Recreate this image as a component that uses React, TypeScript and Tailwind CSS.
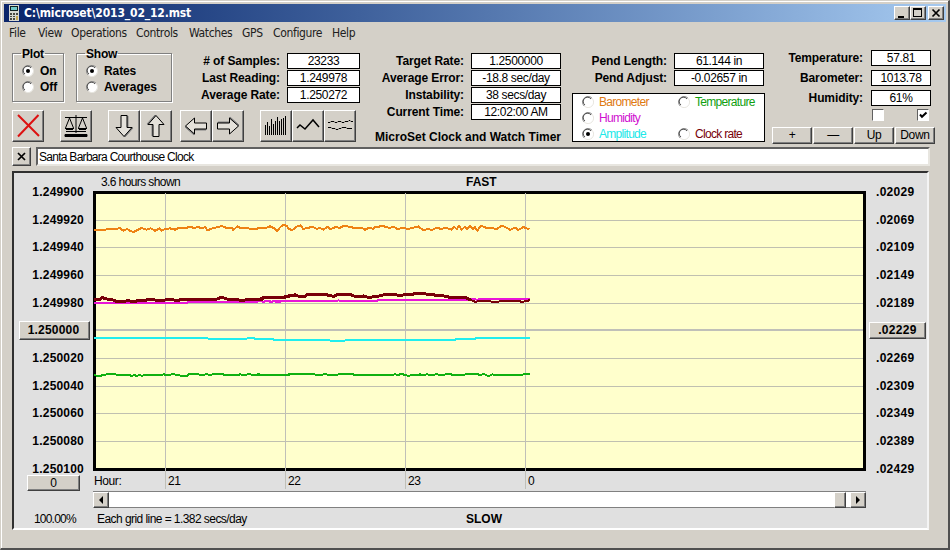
import type { ReactNode } from 'react'
import clsx from 'clsx'

const raised =
  'bg-[#d4d0c8] border border-t-white border-l-white border-r-[#404040] border-b-[#404040] shadow-[inset_-1px_-1px_0_#808080]'
const bold = 'font-bold text-[12px]'

const menu = [
  { label: 'File', width: 'w-[29px]' },
  { label: 'View', width: 'w-[33px]' },
  { label: 'Operations', width: 'w-[65px]' },
  { label: 'Controls', width: 'w-[53px]' },
  { label: 'Watches', width: 'w-[53px]' },
  { label: 'GPS', width: 'w-[31px]' },
  { label: 'Configure', width: 'w-[59px]' },
  { label: 'Help', width: 'w-[40px]' },
]

const leftAxis = [
  '1.249900', '1.249920', '1.249940', '1.249960', '1.249980', '1.250000',
  '1.250020', '1.250040', '1.250060', '1.250080', '1.250100',
]
const rightAxis = [
  '.02029', '.02069', '.02109', '.02149', '.02189', '.02229',
  '.02269', '.02309', '.02349', '.02389', '.02429',
]

// each trace is recorded in two blocks, in thirds of a pixel
const traces = [
  {
    name: 'humidity',
    color: '#e815d8',
    width: 6,
    first: '12,264 285,264 300,261 500,261 505,258 520,260 532,257 545,260 560,257 575,259 600,258',
    second: '0,258 12,260 22,258 30,261 42,259 50,261 62,260 68,258 230,258 236,256 242,258 350,258 355,255 620,255 630,253 640,251 650,254 665,252 720,253 735,251 745,253 760,251 810,251',
  },
  {
    name: 'rate',
    color: '#780008',
    width: 9,
    first: '12,255 30,253 38,247 45,251 65,254 75,257 82,260 100,259 115,257 130,260 145,257 170,255 195,255 210,258 225,255 240,254 265,256 277,252 290,254 350,253 375,255 385,250 395,247 405,250 420,255 435,252 450,256 480,254 515,254 525,247 560,248 585,247 600,243',
    second: '0,252 12,247 70,247 85,243 98,243 105,239 112,243 135,244 140,239 195,238 210,242 222,244 232,238 270,238 285,244 310,243 325,247 350,245 370,240 405,238 420,243 435,238 458,239 463,235 475,237 485,236 520,239 530,242 540,240 560,245 575,248 590,246 620,249 635,256',
  },
  {
    name: 'rate tail',
    color: '#780008',
    width: 6,
    first: '',
    second: '633,255 645,260 655,259 690,259 700,261 715,261 720,258 770,258 785,260 800,259 810,254',
  },
  {
    name: 'amplitude',
    color: '#20eeee',
    width: 6,
    first: '12,369 352,369 355,371 470,371 478,369 488,369 495,371 548,372 552,375 600,375',
    second: '-10,372 40,372 45,375 205,375 215,378 250,378 260,375 585,374 590,372 645,371 650,369 810,369',
  },
  {
    name: 'temperature',
    color: '#10b010',
    width: 6,
    first: '12,481 30,483 40,480 55,477 75,478 85,480 118,480 125,483 132,480 140,483 150,480 155,483 162,480 210,480 222,478 232,481 250,477 262,480 280,483 290,483 298,477 320,477 335,480 350,478 362,480 372,477 395,477 405,480 430,480 445,481 450,478 465,480 478,477 490,480 500,480 506,477 514,480 600,480',
    second: '-10,480 80,480 88,477 160,477 170,480 185,480 195,477 205,480 230,480 240,477 275,477 285,480 398,480 405,477 412,480 425,477 445,483 455,480 470,481 480,478 488,481 500,478 515,480 530,478 545,480 568,477 580,480 610,480 620,477 650,477 660,480 672,477 685,484 698,478 705,480 785,480 792,477 810,477',
  },
  {
    name: 'barometer',
    color: '#ee8214',
    width: 6,
    first: '12,45 60,43 90,40 100,47 112,42 120,47 130,51 145,44 155,39 170,44 182,40 195,47 208,41 215,47 225,42 240,40 255,44 265,39 285,40 300,35 312,39 325,36 335,40 345,36 352,46 365,41 380,37 395,33 410,39 425,38 430,45 442,34 452,40 470,40 495,42 510,39 525,40 540,34 553,40 562,48 572,35 582,29 590,33 597,42',
    second: '85,42 97,45 110,35 122,31 130,42 145,38 160,36 170,42 180,39 190,44 203,35 210,43 225,37 240,38 253,32 270,36 290,40 305,38 315,44 328,38 340,42 347,35 372,34 388,39 400,35 412,42 430,39 445,42 460,38 475,34 490,46 505,41 515,46 530,38 543,42 557,38 575,44 582,35 590,42 597,33 605,44 615,35 622,42 630,33 640,42 645,36 652,47 662,32 680,39 700,40 710,42 725,32 740,38 750,45 765,38 775,45 790,36 800,40 808,43',
  },
]

function Radio({ on = false }: { on?: boolean }) {
  return (
    <svg width="12" height="12" viewBox="0 0 12 12" className="shrink-0">
      <circle cx="6" cy="6" r="5.2" fill="#fff" />
      <path d="M10 2.2A5.4 5.4 0 1 0 2.2 10" fill="none" stroke="#808080" />
      <path d="M9 3A4.3 4.3 0 1 0 3 9" fill="none" stroke="#404040" strokeWidth="0.9" />
      <path d="M10 2.2A5.4 5.4 0 0 1 2.2 10" fill="none" stroke="#e8e6e0" />
      {on && <circle cx="6" cy="6" r="2" />}
    </svg>
  )
}

function Group({ title, options, className }: { title: string; options: string[]; className: string }) {
  return (
    <fieldset
      className={clsx(
        'h-[56px] -mt-[7px] border border-[#808080] shadow-[inset_1px_1px_0_#fff,1px_1px_0_#fff] pl-[9px]',
        className,
      )}
    >
      <legend className={clsx(bold, '-ml-[1px] px-[1px] h-[14px] leading-[16px] tracking-[-0.2px]')}>{title}</legend>
      {options.map((option, i) => (
        <div key={option} className="flex items-center h-[16px] gap-[6px] relative top-[3px]">
          <Radio on={i === 0} />
          <span className={clsx(bold, 'tracking-[-0.1px]')}>{option}</span>
        </div>
      ))}
    </fieldset>
  )
}

interface ReadingProps {
  label: string
  value: string
  box: string
  gap?: string
}

function Reading({ label, value, box, gap = 'gap-[7px]' }: ReadingProps) {
  return (
    <div className={clsx('flex justify-end items-center h-[16px]', gap)}>
      <span className={clsx(bold, 'tracking-[-0.1px]')}>{label}</span>
      <span
        className={clsx(
          'h-[16px] shrink-0 border border-black bg-white text-center leading-[15px] tracking-[-0.35px]',
          box,
        )}
      >
        {value}
      </span>
    </div>
  )
}

function Tool({ children, className }: { children: ReactNode; className?: string }) {
  return (
    <button className={clsx(raised, 'size-[32px] flex items-center justify-center', className)}>
      <svg width="30" height="30" viewBox="0 0 30 30" fill="none" stroke="#000" className="shrink-0">
        {children}
      </svg>
    </button>
  )
}

function ArrowShape({ turn }: { turn: number }) {
  return (
    <g transform={`rotate(${turn} 15 15)`}>
      <path d="M12 5h6v12h5l-8 9-8-9h5z" fill="#808080" stroke="#808080" transform="translate(1 0)" />
      <path d="M12 4.500h6v12h5l-8 9-8-9h5z" fill="#e4e1da" />
    </g>
  )
}

function Toolbar() {
  return (
    <div className="flex">
      <Tool>
        <path d="M5 4 26 25M25.500 4 5 25.500" stroke="#dd1111" strokeWidth="2" />
      </Tool>
      <Tool className="ml-[16px]">
        <path d="M4 6.500h22M15 4v18M11 20.500h8M5 20.500h20" />
        <path d="M8.500 7 4.500 17M8.500 7l4 10M21.500 7l-4 10M21.500 7l4 10M4 17.500h9M17 17.500h9" />
        <path d="M5 18.500h7M18 18.500h7" />
        <path d="M4 23.500h22v2H4z" fill="#000" />
      </Tool>
      <Tool className="ml-[16px]">
        <ArrowShape turn={0} />
      </Tool>
      <Tool>
        <ArrowShape turn={180} />
      </Tool>
      <Tool className="ml-[8px]">
        <ArrowShape turn={90} />
      </Tool>
      <Tool>
        <ArrowShape turn={-90} />
      </Tool>
      <Tool className="ml-[16px]">
        <path
          d="M4.500 14v10M6.500 11v13M8.500 15v9M10.500 8v16M12.500 13v11M14.500 10v14M16.500 6v18M18.500 10v14M20.500 8v16M22.500 7v17M24.500 5v19"
          strokeWidth="1"
          shapeRendering="crispEdges"
        />
      </Tool>
      <Tool>
        <path d="M4 17l3-3 5 4 8-9 6 7" strokeWidth="1.5" />
      </Tool>
      <Tool>
        <path
          d="M3 11.500h2l1-1h3l1 1h2l1-1h3l1 1h2l1-1h3l1-1h1l1 1h2M3 16.500h3l1 1h3l1 1h2l1-1h2l1-1h4l1 1h5"
          strokeWidth="1"
        />
      </Tool>
    </div>
  )
}

function LegendItem({ label, on, className }: { label: string; on?: boolean; className: string }) {
  return (
    <div className={clsx('flex items-center gap-[5px] h-[16px]', className)}>
      <Radio on={on} />
      <span className="tracking-[-0.7px]">{label}</span>
    </div>
  )
}

function Header() {
  return (
    <div className="flex h-[105px] pl-[8px] pt-[11px]">
      <div className="w-[348px]">
        <div className="flex h-[57px]">
          <Group title="Plot" options={['On', 'Off']} className="w-[52px]" />
          <Group title="Show" options={['Rates', 'Averages']} className="w-[96px] ml-[12px]" />
          <div className="flex-1 flex flex-col gap-[1px]">
            <Reading label="# of Samples:" value="23233" box="w-[73px]" />
            <Reading label="Last Reading:" value="1.249978" box="w-[73px]" />
            <Reading label="Average Rate:" value="1.250272" box="w-[73px]" />
          </div>
        </div>
        <Toolbar />
      </div>

      <div className="w-[201px] flex flex-col gap-[1px]">
        <Reading label="Target Rate:" value="1.2500000" box="w-[90px]" />
        <Reading label="Average Error:" value="-18.8 sec/day" box="w-[90px]" />
        <Reading label="Instability:" value="38 secs/day" box="w-[90px]" />
        <Reading label="Current Time:" value="12:02:00 AM" box="w-[90px]" />
        <div className={clsx(bold, 'text-right mt-[8px] leading-[16px] whitespace-nowrap')}>
          MicroSet Clock and Watch Timer
        </div>
      </div>

      <div className="w-[204px] flex flex-col gap-[1px]">
        <Reading label="Pend Length:" value="61.144 in" box="w-[90px] mr-[1px]" />
        <Reading label="Pend Adjust:" value="-0.02657 in" box="w-[90px] mr-[1px]" />
        <div className="ml-[11px] mt-[6px] h-[49px] w-[193px] border border-black bg-white grid grid-cols-[96px_1fr] pl-[9px] content-start">
          <LegendItem label="Barometer" className="text-[#e07a10]" />
          <LegendItem label="Temperature" className="text-[#10a010]" />
          <LegendItem label="Humidity" className="text-[#d010d0] col-span-2" />
          <LegendItem label="Amplitude" on className="text-[#20e8e8]" />
          <LegendItem label="Clock rate" className="text-[#780008]" />
        </div>
      </div>

      <div className="w-[170px] -mt-[3px]">
        <div className="flex flex-col gap-[4px] pr-[4px]">
          <Reading label="Temperature:" value="57.81" box="w-[60px]" gap="gap-[8px]" />
          <Reading label="Barometer:" value="1013.78" box="w-[60px]" gap="gap-[8px]" />
          <Reading label="Humidity:" value="61%" box="w-[60px]" gap="gap-[8px]" />
        </div>
        <div className="flex justify-end gap-[33px] pr-[6px] mt-[3px]">
          <Check />
          <Check on />
        </div>
        <div className="flex gap-[1px] pl-[7px] mt-[6px]">
          {['+', '—', 'Up', 'Down'].map((label) => (
            <button key={label} className={clsx(raised, 'w-[40px] h-[17px] shrink-0 leading-[15px] tracking-[-0.3px]')}>
              {label}
            </button>
          ))}
        </div>
      </div>
    </div>
  )
}

function Check({ on = false }: { on?: boolean }) {
  return (
    <span className="size-[12px] bg-white border border-t-[#606060] border-l-[#606060] border-r-white border-b-white">
      {on && (
        <svg width="10" height="10" viewBox="0 0 10 10">
          <path d="M2 4.500 4 6.800 8.500 2.500" fill="none" stroke="#000" strokeWidth="2" />
        </svg>
      )}
    </span>
  )
}

function Plot() {
  return (
    <svg width="773" height="299" viewBox="0 0 773 299" shapeRendering="crispEdges" className="block">
      <rect x="1.500" y="1.500" width="770" height="277" fill="#ffffcc" stroke="#000" strokeWidth="3" />
      {[29, 56, 84, 112, 167, 195, 222, 250].map((y) => (
        <rect key={y} x="3" y={y} width="767" height="1" fill="#c0c0b0" />
      ))}
      <rect x="3" y="138" width="767" height="2" fill="#c0c0b8" />
      {[72, 192, 312, 432].map((x) => (
        <rect key={x} x={x} y="2" width="1" height="296" fill="#c0c0b8" />
      ))}
      {traces.map((trace) => (
        <g key={trace.name} fill="none" stroke={trace.color} strokeWidth={trace.width}>
          <polyline points={trace.first} transform="translate(-3 24) scale(0.33333)" />
          <polyline points={trace.second} transform="translate(167 24) scale(0.33333)" />
        </g>
      ))}
    </svg>
  )
}

function ChartPanel() {
  return (
    <div className="ml-[8px] mt-[5px] w-[917px] h-[359px] bg-[#e0e0e0] border-2 border-t-[#303030] border-l-[#303030] border-r-[#f4f4f4] border-b-white flex">
      <div className="w-[79px] pt-[5px]">
        {leftAxis.map((value, i) => (
          <div key={value} className="h-[27.7px] flex items-center justify-end pr-[9px]">
            {i === 5 ? (
              <button className={clsx(raised, 'h-[19px] w-[71px] -mr-[6px] pr-[2px] shrink-0 text-[12px] font-bold tracking-[0.2px] leading-[15px]')}>
                {value}
              </button>
            ) : (
              <span className="text-[12px] font-bold tracking-[0.2px]">{value}</span>
            )}
          </div>
        ))}
        <button className={clsx(raised, 'block ml-[13px] -mt-[8px] h-[16px] w-[53px] leading-[14px]')}>0</button>
        <div className="mt-[20px] ml-[20px] tracking-[-0.8px] leading-[16px]">100.00%</div>
      </div>

      <div className="w-[773px]">
        <div className="h-[18px] grid grid-cols-[373px_1fr] items-center">
          <span className="pl-[8px] tracking-[-0.6px]">3.6 hours shown</span>
          <span className={bold}>FAST</span>
        </div>
        <Plot />
        <div className="flex -mt-[17px] h-[18px] leading-[16px] tracking-[-0.4px]">
          <span className="w-[75px] pl-[1px]">Hour:</span>
          <span className="w-[120px]">21</span>
          <span className="w-[120px]">22</span>
          <span className="w-[120px]">23</span>
          <span>0</span>
        </div>
        <div className="flex h-[17px] bg-white border-y border-y-[#808080]">
          <button className={clsx(raised, 'w-[16px] h-[16px] flex items-center justify-center')}>
            <svg width="4" height="8" viewBox="0 0 4 8">
              <path d="M4 0v8L0 4z" />
            </svg>
          </button>
          <div className="flex-1" />
          <div className={clsx(raised, 'w-[12px] h-[16px] mr-[4px]')} />
          <button className={clsx(raised, 'w-[16px] h-[16px] flex items-center justify-center')}>
            <svg width="4" height="8" viewBox="0 0 4 8">
              <path d="M0 0v8L4 4z" />
            </svg>
          </button>
        </div>
        <div className="grid grid-cols-[373px_1fr] mt-[3px] leading-[16px]">
          <span className="pl-[4px] tracking-[-0.56px]">Each grid line = 1.382 secs/day</span>
          <span className={bold}>SLOW</span>
        </div>
      </div>

      <div className="w-[61px] pt-[5px]">
        {rightAxis.map((value, i) => (
          <div key={value} className="h-[27.7px] flex items-center pl-[10px]">
            {i === 5 ? (
              <button className={clsx(raised, 'h-[17px] w-[57px] -ml-[7px] shrink-0 text-[12px] font-bold tracking-[0.3px] leading-[14px]')}>
                {value}
              </button>
            ) : (
              <span className="text-[12px] font-bold tracking-[0.3px]">{value}</span>
            )}
          </div>
        ))}
      </div>
    </div>
  )
}

function TitleBar() {
  return (
    <div className="h-[18px] flex items-center bg-linear-to-r from-[#0a246a] to-[#a6caf0] pl-[4px] pr-[2px]">
      <svg width="12" height="16" viewBox="0 0 12 16" shapeRendering="crispEdges">
        <path d="M1 0h10v16H1z" fill="#d8d8d0" />
        <path d="M2 1h8v5H2z" fill="#102020" />
        <path d="M3 2h6v3H3z" fill="#70c8c8" />
        <path d="M2 8h2v2H2zM5 8h2v2H5zM8 8h2v2H8zM2 11h2v1H2zM5 11h2v1H5zM2 13h2v2H2zM5 13h2v2H5z" fill="#484840" />
        <path d="M8 11h2v4H8z" fill="#c8a850" />
      </svg>
      <span className="ml-[4px] flex-1 text-white font-bold text-[12px] tracking-[-0.15px] font-['DejaVu_Sans_Condensed','DejaVu_Sans',sans-serif] [font-stretch:condensed]">
        C:\microset\2013_02_12.mst
      </span>
      <div className="flex">
        <button className={clsx(raised, 'w-[16px] h-[14px]')}>
          <svg width="14" height="12" shapeRendering="crispEdges">
            <path d="M3 9h6v2H3z" />
          </svg>
        </button>
        <button className={clsx(raised, 'w-[16px] h-[14px]')}>
          <svg width="14" height="12" shapeRendering="crispEdges">
            <path d="M2 1h9v9H2zM3 3v6h7V3z" fillRule="evenodd" />
          </svg>
        </button>
        <button className={clsx(raised, 'w-[16px] h-[14px] ml-[2px]')}>
          <svg width="14" height="12">
            <path d="M3.500 2.500l7 7M10.500 2.500l-7 7" stroke="#000" strokeWidth="1.700" />
          </svg>
        </button>
      </div>
    </div>
  )
}

export default function App() {
  return (
    <div className="w-[950px] h-[550px] overflow-hidden bg-[#d4d0c8] text-black text-[12px] font-['Liberation_Sans',Arial,sans-serif] border-t border-l border-t-[#d4d0c8] border-l-[#d4d0c8] border-r-2 border-b-2 border-r-[#505050] border-b-[#505050]">
      <div className="h-full border-t border-l border-white pl-[2px] pt-[2px] pr-[2px]">
        <TitleBar />
        <div className="flex h-[20px] items-center pt-[2px] pl-[5px] text-[12px] text-[#202020] font-['DejaVu_Sans_Condensed','DejaVu_Sans',sans-serif] [font-stretch:condensed] tracking-[-0.35px]">
          {menu.map((item) => (
            <span key={item.label} className={item.width}>
              {item.label}
            </span>
          ))}
        </div>
        <Header />
        <div className="flex pl-[8px] gap-[5px] h-[19px]">
          <button className={clsx(raised, 'size-[19px] flex items-center justify-center')}>
            <svg width="9" height="9" viewBox="0 0 9 9">
              <path d="M1 1l7 7M8 1 1 8" stroke="#000" strokeWidth="1.700" />
            </svg>
          </button>
          <div className="w-[894px] bg-white border-2 border-t-[#606060] border-l-[#606060] border-r-[#e8e6e0] border-b-[#e8e6e0] leading-[16px] pl-[1px] tracking-[-0.72px]">
            Santa Barbara Courthouse Clock
          </div>
        </div>
        <ChartPanel />
      </div>
    </div>
  )
}
